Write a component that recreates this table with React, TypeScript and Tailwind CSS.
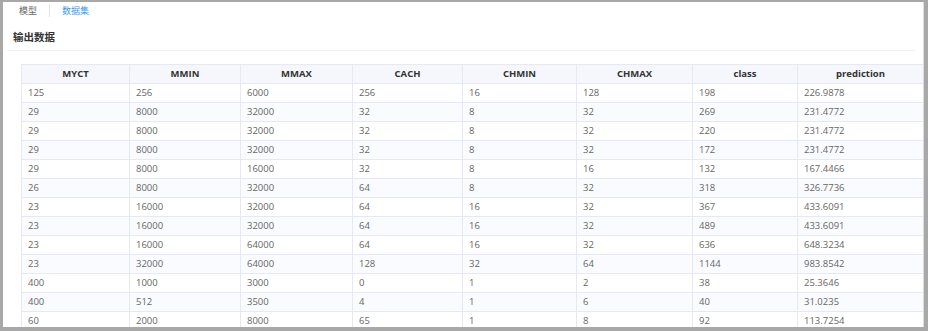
import React from "react";

const columns = [
  { key: "MYCT", w: "w-[108px]" },
  { key: "MMIN", w: "w-[111px]" },
  { key: "MMAX", w: "w-[112px]" },
  { key: "CACH", w: "w-[110px]" },
  { key: "CHMIN", w: "w-[114px]" },
  { key: "CHMAX", w: "w-[116px]" },
  { key: "class", w: "w-[105px]" },
  { key: "prediction", w: "w-[126px]" },
];

const rows: string[][] = [
  ["125", "256", "6000", "256", "16", "128", "198", "226.9878"],
  ["29", "8000", "32000", "32", "8", "32", "269", "231.4772"],
  ["29", "8000", "32000", "32", "8", "32", "220", "231.4772"],
  ["29", "8000", "32000", "32", "8", "32", "172", "231.4772"],
  ["29", "8000", "16000", "32", "8", "16", "132", "167.4466"],
  ["26", "8000", "32000", "64", "8", "32", "318", "326.7736"],
  ["23", "16000", "32000", "64", "16", "32", "367", "433.6091"],
  ["23", "16000", "32000", "64", "16", "32", "489", "433.6091"],
  ["23", "16000", "64000", "64", "16", "32", "636", "648.3234"],
  ["23", "32000", "64000", "128", "32", "64", "1144", "983.8542"],
  ["400", "1000", "3000", "0", "1", "2", "38", "25.3646"],
  ["400", "512", "3500", "4", "1", "6", "40", "31.0235"],
  ["60", "2000", "8000", "65", "1", "8", "92", "113.7254"],
];

export default function App() {
  return (
    <div className="w-[928px] h-[331px] bg-[#a8a8a8] pt-[2px] pl-[3px] pr-[4px] pb-[4px] font-['Open_Sans','Noto_Sans_CJK_SC',sans-serif]">
      <div className="w-full h-full bg-white overflow-hidden border-r border-[#dcdcdc]">
        {/* tabs */}
        <div className="flex items-center h-[17px] pl-[16px] text-[9px] leading-none">
          <span className="text-[#666]">模型</span>
          <span className="w-px h-[13px] bg-[#e4e4e4] ml-[12px] mr-[12px]" />
          <span className="text-[#3a9bf0]">数据集</span>
        </div>

        <div className="pl-[10px] pt-[13px] pb-[7px] text-[10.5px] leading-none text-[#333] font-semibold">
          输出数据
        </div>
        <div className="ml-[4px] mr-[8px] h-px bg-[#f0f0f0]" />

        <div className="pl-[18px] pt-[13px]">
          <table className="border-collapse table-fixed w-[902px] text-[9.5px] leading-none">
            <thead>
              <tr className="h-[19px] bg-[#f5f7fc]">
                {columns.map((c) => (
                  <th
                    key={c.key}
                    className={`${c.w} border border-[#e6e9f2] text-center font-bold text-[#333]`}
                  >
                    {c.key}
                  </th>
                ))}
              </tr>
            </thead>
            <tbody>
              {rows.map((r, i) => (
                <tr key={i} className={`h-[19px] ${i % 2 === 1 ? "bg-[#fafbfe]" : "bg-white"}`}>
                  {r.map((v, j) => (
                    <td key={j} className="border border-[#e6e9f2] pl-[6px] text-[#666]">
                      {v}
                    </td>
                  ))}
                </tr>
              ))}
            </tbody>
          </table>
        </div>
      </div>
    </div>
  );
}
